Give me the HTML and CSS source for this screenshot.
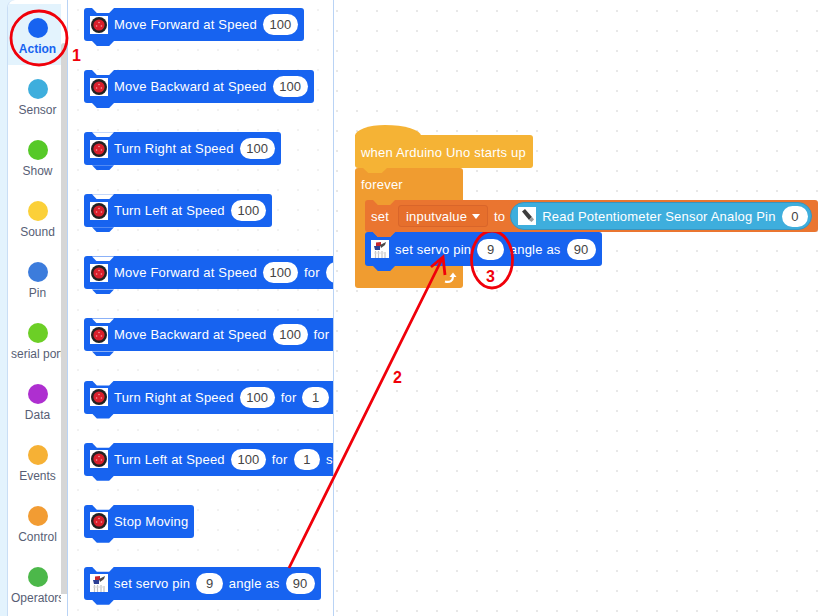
FILE: index.html
```html
<!DOCTYPE html>
<html lang="en">
<head>
    <meta charset="UTF-8">
    <meta name="viewport" content="width=device-width, initial-scale=1.0">
    <title>Arduino Uno blocks</title>
    <link rel="stylesheet" href="styles.css">
</head>
<body>
    <svg class="defs" width="0" height="0">
        <symbol id="wheel" viewBox="0 0 18 18">
            <rect width="18" height="18" fill="#fff"/>
            <circle cx="9" cy="9" r="8" fill="#222"/>
            <circle cx="9" cy="9" r="5.600" fill="#d9202c"/>
            <circle cx="9" cy="6.500" r=".8" fill="#f3a0a6"/>
            <circle cx="6.600" cy="10" r=".8" fill="#f3a0a6"/>
            <circle cx="11.400" cy="10" r=".8" fill="#f3a0a6"/>
        </symbol>
        <symbol id="servo" viewBox="0 0 18 18">
            <rect width="18" height="18" fill="#fff"/>
            <path d="M3 6h6v4H4z" fill="#2b3f93"/>
            <path d="M5 2.500l5-.5v4H5z" fill="#c6262e"/>
            <path d="M9 5l6-3-1 3-4 3z" fill="#4a4a4a"/>
            <path d="M4.500 11v7M7.500 11v7M11 11v7M14 12v6" stroke="#c4c4c4" stroke-width="1.200"/>
            <path d="M3 13h12" stroke="#dcdcdc"/>
        </symbol>
        <symbol id="pot" viewBox="0 0 18 18">
            <rect width="18" height="18" fill="#fff"/>
            <path d="M4 4.500l3-2.500 7 8-3 3z" fill="#3d3d3d"/>
            <path d="M11 13l3-3 2 2.500-2.500 2.500z" fill="#9a9a9a"/>
        </symbol>
    </svg>

    <div class="app">
        <nav class="sidebar">
            <div class="category active"><span class="dot action"></span><span class="cat-name">Action</span></div>
            <div class="category"><span class="dot sensor"></span><span class="cat-name">Sensor</span></div>
            <div class="category"><span class="dot show"></span><span class="cat-name">Show</span></div>
            <div class="category"><span class="dot sound"></span><span class="cat-name">Sound</span></div>
            <div class="category"><span class="dot pin"></span><span class="cat-name">Pin</span></div>
            <div class="category"><span class="dot serial"></span><span class="cat-name long">serial port</span></div>
            <div class="category"><span class="dot data"></span><span class="cat-name">Data</span></div>
            <div class="category"><span class="dot events"></span><span class="cat-name">Events</span></div>
            <div class="category"><span class="dot control"></span><span class="cat-name">Control</span></div>
            <div class="category"><span class="dot operators"></span><span class="cat-name long">Operators</span></div>
        </nav>
        <div class="scrollbar"><div class="thumb"></div></div>

        <section class="palette">
            <div class="block"><svg class="icon"><use href="#wheel"/></svg><span>Move Forward at Speed</span><span class="value">100</span></div>
            <div class="block"><svg class="icon"><use href="#wheel"/></svg><span>Move Backward at Speed</span><span class="value">100</span></div>
            <div class="block"><svg class="icon"><use href="#wheel"/></svg><span>Turn Right at Speed</span><span class="value">100</span></div>
            <div class="block"><svg class="icon"><use href="#wheel"/></svg><span>Turn Left at Speed</span><span class="value">100</span></div>
            <div class="block"><svg class="icon"><use href="#wheel"/></svg><span>Move Forward at Speed</span><span class="value">100</span><span>for</span><span class="value short">1</span><span>secs</span></div>
            <div class="block"><svg class="icon"><use href="#wheel"/></svg><span>Move Backward at Speed</span><span class="value">100</span><span>for</span><span class="value short">1</span><span>secs</span></div>
            <div class="block"><svg class="icon"><use href="#wheel"/></svg><span>Turn Right at Speed</span><span class="value">100</span><span>for</span><span class="value short">1</span><span>secs</span></div>
            <div class="block"><svg class="icon"><use href="#wheel"/></svg><span>Turn Left at Speed</span><span class="value">100</span><span>for</span><span class="value short">1</span><span>secs</span></div>
            <div class="block"><svg class="icon"><use href="#wheel"/></svg><span>Stop Moving</span></div>
            <div class="block"><svg class="icon"><use href="#servo"/></svg><span>set servo pin</span><span class="value short">9</span><span>angle as</span><span class="value mid">90</span></div>
        </section>

        <main class="workspace">
            <div class="script">
                <div class="hat">when Arduino Uno starts up</div>
                <div class="forever">
                    <div class="forever-head">forever</div>
                    <div class="forever-body">
                        <div class="block set-block">
                            <span class="set-label">set</span>
                            <span class="dropdown">inputvalue <i class="caret"></i></span>
                            <span class="to-label">to</span>
                            <span class="reporter"><svg class="icon"><use href="#pot"/></svg><span>Read Potentiometer Sensor Analog Pin</span><span class="value short">0</span></span>
                        </div>
                        <div class="block in-loop"><svg class="icon"><use href="#servo"/></svg><span>set servo pin</span><span class="value short">9</span><span>angle as</span><span class="value mid">90</span></div>
                    </div>
                    <div class="forever-foot">
                        <svg class="loop-arrow" width="14" height="13" viewBox="0 0 14 13"><path d="M2 10.500c5 1.500 8-1 8-5" fill="none" stroke="#fff" stroke-width="2.200"/><path d="M6.500 6L10 1.500 13.500 6z" fill="#fff"/></svg>
                    </div>
                </div>
            </div>
        </main>
    </div>

    <svg class="notes" width="819" height="616" viewBox="0 0 819 616">
        <ellipse cx="39" cy="38" rx="28" ry="27" />
        <ellipse cx="492" cy="259.500" rx="20.500" ry="28.500" />
        <path d="M289 568L443 257M431 267L443 257 445 275" />
        <text x="72" y="61">1</text>
        <text x="393" y="383">2</text>
        <text x="486" y="282">3</text>
    </svg>
</body>
</html>
```

FILE: styles.css
```css
* {
    box-sizing: border-box;
}

body {
    margin: 0;
    height: 616px;
    overflow: hidden;
    position: relative;
    font-family: 'Liberation Sans', Arial, sans-serif;
    background: #fff;
}

.defs {
    display: block;
    height: 0;
}

.app {
    display: flex;
    height: 616px;
    padding-left: 7px;
    background: #e3f3fd;
}

/* categories */
.sidebar {
    width: 54px;
    flex-shrink: 0;
    padding-top: 4px;
    background: #fff;
    border-left: 1px solid #c9def5;
    border-top-left-radius: 8px;
    overflow: hidden;
}

.category {
    height: 61px;
    padding: 14px 0 0 6px;
    display: flex;
    flex-direction: column;
    align-items: center;
    color: #575e75;
    font-size: 12px;
    white-space: nowrap;
}

.category.active {
    background: #e3f3fd;
    color: #1763f0;
    font-weight: bold;
}

.dot {
    width: 20px;
    height: 20px;
    border-radius: 50%;
    flex-shrink: 0;
    margin-bottom: 4px;
}

.cat-name {
    line-height: 14px;
}

.cat-name.long {
    align-self: flex-start;
    margin-left: -3px;
}

.dot.action { background: #1763f0; }
.dot.sensor { background: #3eaedd; }
.dot.show { background: #56c928; }
.dot.sound { background: #fbd039; }
.dot.pin { background: #3c7cdc; }
.dot.serial { background: #6ccf26; }
.dot.data { background: #ae2fd0; }
.dot.events { background: #f6b135; }
.dot.control { background: #f29c33; }
.dot.operators { background: #4cb84a; }

.scrollbar {
    width: 7px;
    flex-shrink: 0;
    padding-top: 43px;
    background: #fff;
    border-right: 1px solid #b9d3f5;
}

.thumb {
    height: 551px;
    border-radius: 3px 3px 0 0;
    background: #d6d6d6;
}

/* block palette */
.palette {
    width: 266px;
    flex-shrink: 0;
    display: flex;
    flex-direction: column;
    align-items: flex-start;
    gap: 29.1px;
    padding: 8px 0 0 16px;
    overflow: hidden;
    background-color: #fff;
    background-image: radial-gradient(circle, #f2f2f2 1px, transparent 1px);
    background-size: 20px 20px;
    border-right: 1px solid #b9d3f5;
}

.block {
    position: relative;
    flex-shrink: 0;
    display: flex;
    align-items: center;
    gap: 6px;
    height: 33px;
    width: max-content;
    padding: 0 6px;
    border-radius: 3px;
    background: #1763f0;
    color: #fff;
    font-size: 13px;
    letter-spacing: 0.2px;
    white-space: nowrap;
    --notch: #fff;
}

.block::before,
.block::after {
    content: "";
    position: absolute;
    left: 8px;
    width: 22px;
    height: 5px;
    clip-path: polygon(0 0, 100% 0, 78% 100%, 22% 100%);
}

.block::before {
    top: 0;
    background: var(--notch);
}

.block::after {
    top: 100%;
    background: #1763f0;
}

.icon {
    width: 18px;
    height: 18px;
    flex-shrink: 0;
}

.value {
    min-width: 35px;
    height: 21px;
    line-height: 21px;
    padding: 0 6px;
    border-radius: 11px;
    background: #fff;
    color: #444;
    text-align: center;
    letter-spacing: 0;
}

.value.short { min-width: 26.5px; }
.value.mid { min-width: 29px; }

/* workspace */
.workspace {
    flex: 1;
    position: relative;
    overflow: hidden;
    background-color: #fff;
    background-image: radial-gradient(circle, #e8e8e8 1px, transparent 1px);
    background-size: 20px 20px;
    background-position: -7px 1px;
}

.script {
    position: absolute;
    left: 21px;
    top: 135px;
    font-size: 13px;
    color: #fff;
    letter-spacing: 0.2px;
    white-space: nowrap;
}

.hat {
    position: relative;
    width: 178px;
    height: 33px;
    line-height: 35px;
    padding-left: 6px;
    border-radius: 0 3px 3px 3px;
    background: #f5b335;
}

.hat::before {
    content: "";
    position: absolute;
    left: 0;
    top: -10px;
    width: 66px;
    height: 11px;
    border-radius: 30px 36px 0 0 / 11px 11px 0 0;
    background: #f5b335;
}

.hat::after {
    content: "";
    position: absolute;
    left: 8px;
    top: 100%;
    width: 24px;
    height: 5px;
    clip-path: polygon(0 0, 100% 0, 78% 100%, 22% 100%);
    background: #f5b335;
    z-index: 1;
}

.forever {
    width: 108px;
    background: #f09c30;
    border-radius: 3px;
}

.forever-head {
    height: 32px;
    line-height: 33px;
    padding-left: 6px;
}

.forever-body {
    padding-left: 10px;
}

.forever-body .block {
    --notch: #f09c30;
}

.forever-body .in-loop {
    height: 34px;
}

.set-block {
    height: 32px;
    gap: 5px;
    background: #ea7530;
    z-index: 1;
}

.set-block::after {
    background: #ea7530;
    z-index: 1;
}

.set-label {
    margin-right: 4px;
}

.to-label {
    margin-left: 1px;
}

.dropdown {
    display: flex;
    align-items: center;
    gap: 5px;
    width: 90px;
    height: 22px;
    padding-left: 7px;
    background: #e66f2c;
    border: 1px solid #d9652a;
    border-radius: 3px;
}

.caret {
    width: 0;
    height: 0;
    border: 4px solid transparent;
    border-top: 5px solid #fff;
    border-bottom: 0;
}

.reporter {
    display: flex;
    align-items: center;
    gap: 6px;
    height: 28px;
    width: 302px;
    padding: 0 3px 0 7px;
    border: 1px solid #3a94bd;
    border-radius: 14px;
    background: #3eaedd;
}

.forever-foot {
    height: 22px;
    display: flex;
    justify-content: flex-end;
    align-items: center;
    padding-right: 6px;
}

/* red markup drawn on the screenshot */
.notes {
    position: absolute;
    left: 0;
    top: 0;
    pointer-events: none;
}

.notes ellipse,
.notes path {
    fill: none;
    stroke: #f0000a;
    stroke-width: 2.800;
}

.notes text {
    fill: #f0000a;
    font-size: 16px;
    font-weight: bold;
}
```
